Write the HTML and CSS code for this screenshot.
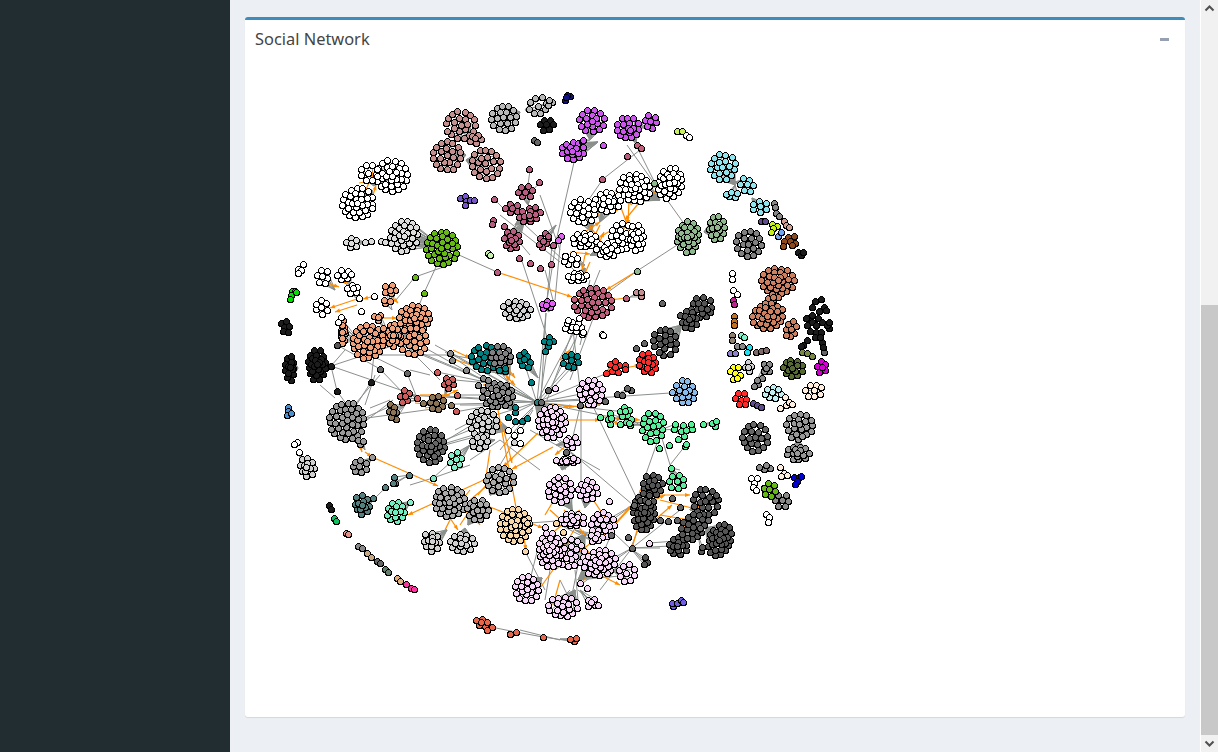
FILE: index.html
```html
<!DOCTYPE html>
<html lang="en">
<head>
<meta charset="utf-8">
<title>Social Network</title>
<link rel="stylesheet" href="styles.css">
</head>
<body>
<div class="app">
  <aside class="sidebar"></aside>
  <main class="content">
    <section class="box">
      <header class="box-header">
        <h3 class="box-title">Social Network</h3>
        <button class="box-tool" type="button" aria-label="Collapse"><span class="minus"></span></button>
      </header>
      <div class="box-body">
        <svg id="graph" class="graph" viewBox="245 64 941 653" xmlns="http://www.w3.org/2000/svg"></svg>
      </div>
    </section>
  </main>
  <div class="scrollbar">
    <div class="sb-btn"><svg width="17" height="17" viewBox="0 0 17 17"><path d="M4.5 10.5 8.5 6.5 12.5 10.5" fill="none" stroke="#505050" stroke-width="2"/></svg></div>
    <div class="sb-track"><div class="sb-thumb"></div></div>
    <div class="sb-btn"><svg width="17" height="17" viewBox="0 0 17 17"><path d="M4.5 6.5 8.5 10.5 12.5 6.5" fill="none" stroke="#505050" stroke-width="2"/></svg></div>
  </div>
</div>
<script src="script.js"></script>
</body>
</html>
```

FILE: styles.css
```css
* { box-sizing: border-box; }
html, body { margin: 0; height: 100%; overflow: hidden; }
body { background: #ecf0f5; font-family: "Noto Sans", "Lato", sans-serif; }
.app { display: flex; width: 1218px; height: 752px; }
.sidebar { flex: 0 0 230px; background: #222d32; }
.content { flex: 1 1 auto; padding: 17px 15px 0; min-width: 0; }
.box { height: 700px; background: #fff; border-top: 3px solid #3c8dbc; border-radius: 3px; box-shadow: 0 1px 1px rgba(0,0,0,.1); display: flex; flex-direction: column; }
.box-header { flex: 0 0 44px; display: flex; align-items: center; justify-content: space-between; padding: 0 16px 6px 10px; }
.box-title { margin: 0; font-size: 16.4px; font-weight: 400; line-height: 1; color: #444; }
.box-tool { border: 0; background: none; padding: 0; display: flex; }
.minus { display: block; width: 9px; height: 3px; background: #97a0b3; }
.box-body { flex: 1 1 auto; min-height: 0; }
.graph { display: block; width: 941px; height: 653px; }
.scrollbar { flex: 0 0 17px; display: flex; flex-direction: column; background: #f1f1f1; border-left: 1px solid #fff; }
.sb-btn { flex: 0 0 17px; display: flex; }
.sb-track { flex: 1 1 auto; padding-top: 288px; }
.sb-thumb { height: 430px; background: #c8c8c8; }
.edge { stroke: #8a8f8c; stroke-width: 1; fill: none; }
.edge-o { stroke: #ff8c00; stroke-width: 1.2; fill: none; }
.node { stroke: #000; stroke-width: 1; shape-rendering: crispEdges; }
.arrow { fill: #ff8c00; }
```

FILE: script.js
```js
(function () {
  var NS = 'http://www.w3.org/2000/svg';
  var svg = document.getElementById('graph');
  var seed = 7;
  function rnd() { seed = (seed * 16807) % 2147483647; return seed / 2147483647; }

  var C = {
    rosy: '#c48f8f', silver: '#b8b8b8', lgray: '#dcdcdc', black: '#1c1c1c', white: '#ffffff',
    purple: '#cc55ee', pale: '#c8f0b0', cyan: '#8ee5ee', sage: '#8fb88f', gray: '#808080',
    rose: '#c0607c', mauve: '#b85c80', green: '#66b814', salmon: '#f0a078', magenta: '#e060f0',
    teal: '#007f80', dark: '#555555', coral: '#cd8060', lilac: '#f5d8f5', red: '#ff2a2a',
    blue: '#88bbee', mint: '#55ee99', ggray: '#999999', brown: '#8b7355', irose: '#cd5c5c',
    tan: '#f8d8a8', slate: '#558080', aqua: '#70eec0', mteal: '#80eec8', orange: '#e8674a',
    dgray: '#666666', olive: '#556b2f', mag2: '#d000d0', yellow: '#ffff20', cream: '#ffeedd',
    pcyan: '#c0eef0', ngray: '#888888', lg2: '#d0d0d0', sil2: '#aaaaaa'
  };

  // x, y, rx, ry, colour, hub x, hub y, rotation (deg)
  var clusters = [
    [461,125,16,15,'rosy',474,139],[447,156,15,16,'rosy',466,155],[486,164,16,16,'rosy',466,160],[476,139,7,6,'rosy',466,140],
    [504,118,14,14,'silver',520,112],[538,106,10,10,'silver',525,110],[551,103,4,5,'silver',540,106],
    [547,125,8,7,'black',552,120],
    [392,176,17,17,'white',376,180,20],[369,173,10,10,'white',374,186],[358,203,17,16,'white',372,190],
    [526,192,9,7,'mauve',528,205],[512,208,8,6,'mauve',525,215],[530,215,12,8,'mauve',515,225,-20],[512,240,9,11,'mauve',525,220],[544,241,5,9,'mauve',556,225,25],
    [404,236,15,17,'lgray',440,245,25],[352,243,7,7,'lgray',365,242],
    [442,248,17,18,'green',445,255],
    [323,277,7,9,'white',335,290],[345,275,9,6,'white',350,288],[353,289,7,6,'white',358,300],[322,307,7,9,'white',330,310],
    [390,290,7,6,'salmon',392,305],[386,302,6,3,'salmon',392,310],[415,318,17,14,'salmon',408,345],[414,341,15,15,'salmon',392,330],[368,342,17,18,'salmon',395,335],[393,335,7,13,'salmon',380,335],[343,332,4,14,'salmon',358,340],[378,317,5,5,'salmon',392,340],
    [517,310,15,10,'lg2',520,322],[547,305,7,6,'magenta',549,312],
    [485,358,15,14,'teal',505,375],[501,357,11,12,'gray',510,375],[525,360,6,10,'teal',538,378,-25],[504,370,6,4,'teal',508,382],
    [571,361,10,8,'teal',571,372],[549,342,6,6,'teal',546,354],
    [317,365,10,17,'black',331,366],[290,368,6,14,'black',298,368],
    [592,121,14,12,'purple',590,140],[628,128,13,12,'purple',636,142],[651,122,8,8,'purple',640,128],[573,151,13,10,'purple',598,142],[583,141,4,3,'purple',590,140],
    [723,167,14,14,'cyan',735,185],[747,185,8,8,'cyan',735,182],[732,195,8,4,'cyan',735,185],[760,207,9,7,'cyan',752,198],
    [749,244,14,14,'gray',750,245],
    [688,237,12,17,'sage',700,232],[717,228,9,14,'sage',704,232],
    [635,188,17,15,'white',660,200,25],[670,183,13,17,'white',657,195,20],[608,202,14,11,'white',600,222],[583,211,14,13,'white',592,232],[622,237,12,15,'white',610,235],[637,238,8,15,'white',630,240,-5],[585,240,14,8,'white',600,245],[607,250,12,8,'white',590,255],[571,260,9,7,'white',585,265],[578,277,11,5,'white',585,268],
    [593,303,20,16,'rose',593,303],[640,294,5,4,'rosy',630,297],
    [573,327,10,6,'white',568,320],[583,333,5,3,'white',572,328],
    [702,308,12,12,'dark',689,322,35],[689,320,9,11,'dark',697,313,-30],[665,342,13,15,'dark',682,325,-20],
    [778,281,18,14,'coral',776,298],[773,298,7,5,'coral',774,290],[768,316,17,14,'coral',776,306,-15],[791,330,6,10,'coral',786,322,20],
    [648,363,9,12,'red',640,368,-20],[615,367,6,8,'red',607,372,-30],
    [591,392,13,14,'lilac',600,405],[629,390,4,4,'dgray',617,394],
    [685,392,11,13,'blue',672,392],
    [625,412,6,7,'mint',617,420],[610,419,3,8,'mint',622,418],[629,423,5,5,'mint',640,425],[653,427,12,16,'mint',640,422],[684,431,4,7,'mint',670,430],[675,427,4,4,'mint',660,430],[692,427,3,4,'mint',680,430],[715,424,4,5,'mint',703,424],[677,482,9,8,'mint',671,468],
    [552,422,15,17,'lilac',535,402],[572,442,7,7,'lilac',556,445],[567,461,13,3,'lilac',562,470],
    [560,490,13,14,'lilac',572,510],[588,490,11,11,'lilac',585,508],[603,525,13,14,'lilac',590,540],[573,520,13,8,'lilac',585,525],[570,553,16,15,'lilac',585,535],[600,563,17,14,'lilac',578,580,-18],[627,573,9,10,'lilac',612,570],
    [563,607,16,11,'lilac',575,590],[592,603,6,6,'lilac',580,590],[595,538,6,6,'lilac',575,530],[527,589,13,14,'lilac',542,578,-15],[550,550,12,19,'lilac',570,545],
    [653,485,11,11,'dark',650,495],[644,512,12,20,'dark',640,510],[706,502,14,15,'dark',690,510,-15],[720,540,12,18,'dark',705,528,22],[678,546,11,10,'dark',690,530],[693,527,12,15,'dark',705,525,30],[702,550,4,4,'dark',698,535],[646,562,4,6,'dark',632,550],
    [755,438,14,15,'dgray',755,440],[800,425,15,12,'ggray',798,437],[798,453,13,8,'ggray',798,440],[797,437,7,4,'ggray',800,430],
    [793,368,11,10,'olive',793,368],[822,367,6,7,'mag2',822,367],[767,368,5,7,'ngray',757,380],[749,367,5,6,'lg2',749,367],
    [773,393,10,7,'pcyan',773,393],[814,391,10,8,'cream',814,391],
    [765,468,7,4,'ngray',772,470],[782,501,8,8,'ngray',780,498],[770,490,8,8,'green',770,490],
    [347,421,19,20,'ggray',360,420],[360,467,9,8,'ggray',372,458],[361,442,5,4,'ggray',365,450],
    [393,412,5,10,'brown',405,405,-15],[437,403,8,9,'brown',425,403],[405,397,6,8,'irose',420,400],[449,383,6,7,'irose',445,395],
    [498,395,17,13,'ngray',515,410],[483,423,15,14,'lg2',510,430],[480,443,10,7,'lg2',495,440],[431,446,15,18,'dgray',445,440],[456,460,7,9,'mteal',470,445],
    [500,480,15,14,'sil2',490,495],[450,502,17,16,'sil2',462,490],[478,510,12,12,'sil2',468,525],[432,542,9,11,'lg2',447,530,-25],[462,543,14,10,'lg2',465,528],
    [515,525,16,18,'tan',510,520],
    [362,505,8,11,'slate',373,498,-20],[394,482,3,6,'slate',409,475],[387,488,3,3,'slate',375,498],[396,512,10,11,'aqua',410,502],
    [307,467,8,11,'lg2',300,456,-15],[482,623,8,5,'orange',490,626,20],[574,640,6,3,'orange',560,639]
  ];

  // explicit single nodes: x, y, colour key
  var singles = [
    [534,140,'dgray'],[537,142,'dgray'],[460,198,'blue2'],[465,196,'blue2'],[466,201,'blue2'],[470,200,'blue2'],[474,200,'blue2'],[465,205,'blue2'],
    [565,100,'navy'],[570,96,'navy'],[567,95,'navy'],[566,97,'navy'],
    [529,169,'mauve'],[539,182,'mauve'],[494,199,'mauve'],[493,220,'mauve'],[492,224,'mauve'],[504,226,'mauve'],[548,236,'mauve'],[540,268,'mauve'],[530,263,'mauve'],[519,258,'mauve'],
    [365,242,'lgray'],[371,241,'lgray'],[381,241,'lgray'],[385,242,'lgray'],
    [488,253,'pale'],[490,255,'pale'],[497,272,'mauve'],[415,277,'green'],[424,293,'green'],
    [298,269,'white'],[303,264,'white'],[301,270,'white'],[298,273,'white'],
    [292,291,'lime'],[295,291,'lime'],[291,295,'lime'],[296,292,'lime'],[290,299,'lime'],
    [281,323,'black'],[286,321,'black'],[284,327,'black'],[289,326,'black'],[283,331,'black'],[288,332,'black'],
    [359,298,'white'],[374,296,'white'],[361,311,'white'],[341,317,'white'],[338,322,'white'],
    [602,179,'mauve'],[627,156,'mauve'],[637,145,'rose'],[641,148,'rose'],[637,271,'sage'],[626,298,'rose'],[654,183,'sage'],[561,236,'magenta'],[553,245,'mauve'],[551,264,'mauve'],
    [677,131,'pale2'],[682,131,'pale2'],[686,135,'white'],[689,137,'white'],
    [774,203,'ngray'],[775,207,'ngray'],[776,213,'ngray'],[779,216,'ngray'],[784,221,'pink'],[786,225,'pink'],[789,227,'pink'],
    [761,221,'dpurple'],[765,221,'dpurple'],[772,224,'lemon'],[777,226,'lemon'],[773,228,'lemon'],[771,232,'lemon'],
    [778,236,'sky'],[781,232,'sky'],[788,237,'bronze'],[794,236,'bronze'],[784,241,'bronze'],[790,241,'bronze'],[795,243,'bronze'],[783,246,'bronze'],[792,245,'bronze'],
    [798,252,'black'],[801,255,'black'],[803,252,'black'],
    [732,273,'white'],[732,279,'white'],[733,290,'white'],[737,294,'white'],[733,300,'mag3'],[734,304,'mag3'],
    [734,316,'copper'],[734,321,'copper'],[734,325,'copper'],[732,335,'taupe'],[732,340,'taupe'],[741,335,'mteal'],[744,337,'mteal'],
    [737,346,'ngray'],[742,346,'ngray'],[749,347,'cyan2'],[747,352,'cyan2'],[730,353,'lav'],[735,353,'lav'],[756,352,'taupe2'],[761,351,'taupe2'],[766,350,'taupe2'],
    [802,352,'olive2'],[807,353,'olive2'],[812,356,'olive2'],[824,352,'dgray'],
    [606,373,'red'],[625,365,'red'],[625,369,'red'],[639,365,'red'],[617,394,'dgray'],[622,395,'dgray'],[605,401,'dgray'],
    [672,392,'blue'],[600,417,'mint'],[620,424,'mint'],[703,424,'mint'],[678,439,'mint'],[685,446,'mint'],[669,445,'mint'],[659,448,'mint'],[686,444,'mint'],[671,468,'mint'],
    [733,367,'yellow'],[730,371,'yellow'],[738,367,'yellow'],[735,373,'yellow'],[740,375,'yellow'],[733,379,'yellow'],[737,378,'yellow'],
    [738,393,'red'],[744,393,'red'],[735,398,'red'],[741,400,'red'],[746,399,'red'],[739,404,'red'],[745,404,'red'],
    [753,403,'dpurple'],[757,405,'dpurple'],[761,407,'dpurple'],[780,408,'cream'],[786,405,'cream'],[789,402,'cream'],[785,397,'cream'],[792,404,'cream'],
    [762,378,'ngray'],[758,384,'ngray'],
    [780,467,'cream'],[784,473,'cream'],[787,475,'cream'],[781,476,'cream'],
    [794,477,'blue3'],[799,477,'blue3'],[801,476,'blue3'],[797,481,'blue3'],[795,484,'blue3'],
    [751,478,'white'],[757,478,'white'],[754,483,'white'],[753,487,'white'],[756,490,'white'],
    [766,514,'white'],[769,517,'white'],[768,522,'white'],
    [673,606,'vio'],[672,603,'vio'],[677,603,'vio'],[681,600,'vio'],[683,602,'vio'],
    [288,407,'blue4'],[288,411,'blue4'],[287,415,'blue4'],[291,413,'blue4'],
    [297,442,'white'],[294,444,'white'],[299,452,'white'],
    [329,505,'black'],[331,509,'black'],[334,518,'jade'],[336,521,'jade'],[346,533,'salmon2'],[348,534,'salmon2'],[358,546,'ngray'],[362,548,'ngray'],[367,553,'khaki'],[371,557,'khaki'],[377,561,'dgray'],[380,563,'dgray'],[385,569,'moss'],[388,572,'moss'],[397,578,'khaki2'],[400,581,'khaki2'],[406,584,'hot'],[411,588,'hot'],[414,589,'hot'],
    [492,627,'orange'],[487,630,'orange'],[510,634,'orange'],[516,632,'orange'],[543,637,'orange'],
    [337,345,'dark'],[331,366,'black'],[337,391,'black'],[371,382,'black'],[372,457,'ggray'],[409,475,'slate'],[373,498,'slate'],[410,502,'mteal'],[433,478,'lgreen'],
    [383,328,'salmon'],[407,373,'dgray'],[380,369,'dgray'],[437,372,'irose'],[417,398,'irose'],[457,395,'irose'],[456,411,'irose'],[451,405,'brown'],[423,403,'brown'],
    [450,353,'ngray'],[452,360,'ngray'],[466,370,'ngray'],[478,385,'ngray'],[483,378,'ngray'],[488,380,'ngray'],
    [537,402,'dteal'],[541,402,'dgray'],[548,390,'dgray'],[531,382,'teal'],[545,351,'teal'],[508,417,'teal'],[515,421,'teal'],[515,412,'teal'],[522,421,'teal'],[515,407,'teal'],[527,418,'teal'],
    [514,435,'white'],[508,430,'white'],[520,430,'white'],[514,442,'lg2'],[520,443,'white'],
    [527,523,'tan'],[525,551,'tan'],[556,523,'tan'],[563,532,'tan'],[545,527,'lilac'],
    [634,505,'dgray'],[632,548,'dgray'],[611,535,'dgray'],[628,537,'dgray'],[649,543,'lilac'],[609,501,'lilac'],
    [648,502,'dgray'],[672,498,'dgray'],[680,507,'dgray'],[700,528,'dgray'],[708,520,'dgray'],[668,521,'dgray'],[660,520,'dgray'],[677,520,'dgray'],
    [587,588,'lilac'],[580,583,'lilac'],[598,605,'lilac'],[558,563,'lilac'],[573,458,'lilac'],[566,452,'dgray'],[566,440,'lilac'],[580,405,'dgray'],[555,388,'lilac'],[590,400,'lilac'],
    [630,130,'purple'],[603,145,'purple'],[558,240,'magenta'],[576,327,'white'],[579,318,'white'],[602,334,'white'],[603,335,'white'],[568,320,'white'],
    [662,303,'dgray'],[636,348,'dgray'],[644,343,'dgray'],[757,380,'ngray'],[754,386,'ngray'],[810,317,'black'],[829,328,'black']
  ];
  var extra = {
    blue2:'#7755cc', navy:'#101080', lime:'#00e000', pale2:'#c8f060', pink:'#d0a090', dpurple:'#604a90', lemon:'#c8f020',
    sky:'#70a8f0', bronze:'#8b4a20', mag3:'#c02090', copper:'#c07020', taupe:'#908070', cyan2:'#20e0f0', lav:'#9080d0',
    taupe2:'#806868', olive2:'#788a40', blue3:'#0000d0', vio:'#7060e0', blue4:'#4a90d0', jade:'#10c060', salmon2:'#e89088',
    khaki:'#c8a880', moss:'#60806a', khaki2:'#dcb080', hot:'#ff30a0', lgreen:'#80e0c0', dteal:'#2a7a78'
  };
  for (var k in extra) C[k] = extra[k];

  // dark sparse cluster, right edge
  [[815,301],[821,299],[824,307],[812,307],[819,311],[826,310],[812,315],[818,318],[812,322],[807,325],[816,325],[822,322],[827,325],[810,331],[816,332],[821,332],[815,337],[807,340],[803,345],[822,342],[823,347],[820,337],[829,322],[806,318],[801,346]]
    .forEach(function (p) { singles.push([p[0], p[1], 'black']); });

  var gray = [
    [449,265,415,277],[415,277,396,300],[436,267,424,293],[424,293,418,308],[459,255,497,272],[593,303,637,271],[637,271,688,238],
    [575,158,557,237],[557,237,547,300],[627,128,637,147],[640,150,603,179],[603,179,585,205],[637,147,655,183],[660,190,690,232],[627,145,654,183],
    [573,330,547,400],[600,300,570,380],[546,313,541,400],[548,343,540,400],[525,365,536,400],[571,368,542,400],[591,392,540,402],
    [537,402,500,385],[537,402,480,362],[537,402,450,352],[537,402,435,345],[537,402,430,395],[537,402,405,395],[537,402,420,405],[537,402,410,350],[537,402,390,340],
    [537,402,480,420],[537,402,552,422],[537,402,590,400],[537,402,625,412],[537,402,650,425],[537,402,685,392],[537,402,605,374],[537,402,570,365],[537,402,505,418],[537,402,575,330],[537,402,546,313],
    [445,352,510,395],[420,345,500,390],[350,345,407,373],[407,373,417,398],[331,366,415,395],[337,345,380,369],[380,369,405,395],[331,366,320,365],[331,366,337,391],[337,391,347,405],[371,382,350,415],[371,382,375,345],[331,366,395,345],[331,366,345,350],[350,410,380,375],
    [367,420,393,400],[367,418,440,408],[437,372,500,385],[470,430,445,440],[500,430,445,445],[500,440,470,460],[470,445,433,478],[433,478,410,485],[470,465,433,478],
    [480,360,450,355],[455,380,510,385],[460,395,500,395],[460,405,500,405],[455,412,510,402],[370,355,450,355],
    [557,440,633,505],[590,400,640,505],[581,400,581,497],[560,440,578,460],[580,407,565,470],[533,408,500,450],[533,410,500,465],[500,440,540,470],[530,430,600,470],
    [561,236,555,300],[552,245,547,300],[545,270,553,300],[520,255,548,340],[505,225,530,255],[495,200,510,215],[530,170,528,185],[540,182,533,190],[540,195,560,250],[500,215,560,262],[525,225,585,280],
    [600,270,578,325],[585,325,580,345],[573,330,581,397],[590,280,572,355],[575,340,552,385],
    [655,500,675,468],[680,470,671,468],[660,432,671,468],[685,446,670,465],[658,440,635,505],
    [633,505,605,525],[633,505,590,530],[632,548,580,585],[632,548,610,560],[632,548,690,545],[632,548,660,548],[632,548,646,565],[632,548,600,590],[632,550,600,520],
    [611,535,600,560],[649,543,690,540],[648,505,630,550],[680,510,632,548],
    [530,523,570,520],[525,551,545,590],[556,523,590,540],[520,630,560,640],[496,628,516,632],[516,632,543,637],[543,637,570,641],
    [578,580,630,575],[578,590,590,600],[570,590,560,600],[575,570,578,600],[570,600,560,580],[583,540,570,605],[550,570,545,600],[540,540,530,580],
    [510,430,540,400],[430,450,480,420],[440,445,490,430],[455,430,490,412],[360,420,393,405],[390,400,370,408],[375,375,365,405],[320,385,335,398],[400,340,440,380],[430,375,410,370]
  ];
  var orange = [
    [372,457,438,486],[488,478,408,515],[498,410,517,513],[490,450,485,483],[553,447,512,469],[538,433,503,467],[503,427,512,463],[490,507,510,515],[530,523,543,528],[524,538,526,550],
    [453,350,470,358],[450,358,480,368],[360,298,330,308],[357,305,335,312],[375,296,363,299],[497,272,572,297],[637,271,606,290],[626,298,610,300],[574,298,600,303],
    [590,226,600,240],[580,235,600,222],[605,215,618,210],[596,250,604,232],[600,225,590,245],[620,205,630,232],[629,200,628,225],[655,183,625,220],[656,187,620,195],[590,262,582,280],[585,255,582,270],
    [628,218,621,232],[595,240,615,228],[570,252,590,254],[615,190,632,205],[650,195,660,190],[583,217,600,215],
    [378,180,384,174],[366,190,373,172],[359,183,376,180],[373,195,376,185],
    [356,287,341,280],[327,283,339,287],[392,297,398,303],[400,335,415,345],[395,325,403,330],[380,318,397,318],
    [440,398,458,390],[415,403,435,405],[420,395,450,395],[425,408,445,405],[360,445,362,452],[365,452,372,457],
    [567,445,555,455],[550,510,570,528],[580,520,565,545],[578,540,600,565],[560,580,553,605],[553,570,535,595],[590,495,610,525],[590,570,620,585],[580,585,600,560],[555,570,595,540],[550,535,580,510],[545,515,560,490],[564,510,585,535],
    [600,540,632,505],[632,548,640,520],[640,490,650,500],[660,500,700,510],[655,500,665,495],[648,495,690,495],[660,515,690,520],[680,525,700,530],[690,500,710,515],[633,505,610,530],[655,520,672,505],
    [600,405,563,407],[537,402,574,407],[601,417,640,420],[610,420,620,425],[640,425,660,418],[560,420,600,420],[610,370,618,375],[625,368,640,365],[606,373,612,368],[672,392,678,388],
    [560,360,570,350],[505,375,515,385],[510,385,483,385],[495,350,515,378],[500,400,510,375],[490,372,510,365],
    [470,490,462,500],[478,495,490,480],[470,500,500,475],[448,515,458,530],[445,530,455,510],[460,525,470,510],[470,510,480,525]
  ];

  function el(name, cls, attrs, parent) {
    var e = document.createElementNS(NS, name);
    e.setAttribute('class', cls);
    for (var a in attrs) e.setAttribute(a, attrs[a]);
    parent.appendChild(e);
    return e;
  }

  var edges = el('g', 'edges', {}, svg);
  var nodesG = el('g', 'nodes', {}, svg);
  var pts = [];
  var GAP = 6.3;   // distance between neighbouring nodes

  // evenly spaced points round an ellipse, by arc length
  function ring(rx, ry, phase) {
    var samples = [], total = 0, i, px = rx, py = 0;
    for (i = 1; i <= 96; i++) {
      var t = i / 96 * Math.PI * 2, qx = rx * Math.cos(t), qy = ry * Math.sin(t);
      total += Math.hypot(qx - px, qy - py);
      samples.push([qx, qy, total]);
      px = qx; py = qy;
    }
    var n = Math.max(1, Math.round(total / GAP)), out = [], idx = 0;
    for (i = 0; i < n; i++) {
      var want = ((i + phase) / n) * total;
      idx = 0;
      while (idx < 95 && samples[idx][2] < want) idx++;
      out.push([samples[idx][0], samples[idx][1]]);
    }
    return out;
  }

  clusters.forEach(function (c) {
    var x = c[0], y = c[1], rx = Math.max(c[2] - 1.6, .6), ry = Math.max(c[3] - 1.6, .6), col = C[c[4]], hx = c[5], hy = c[6], rot = (c[7] || 0) * Math.PI / 180;
    var cs = Math.cos(rot), sn = Math.sin(rot);
    var rings = Math.max(1, Math.round(Math.max(rx, ry) / 6));
    var list = [];
    for (var k = rings; k >= 1; k--) {
      var t = k / rings;
      list = list.concat(ring(rx * t, ry * t, rnd()));
    }
    if (rings > 1 || (rx > 3 && ry > 3)) list.push([0, 0]);
    list.forEach(function (p) {
      var ox = p[0] + (rnd() - .5) * 1.2, oy = p[1] + (rnd() - .5) * 1.2;
      var px = x + ox * cs - oy * sn, py = y + ox * sn + oy * cs;
      el('line', 'edge', { x1: hx, y1: hy, x2: px.toFixed(1), y2: py.toFixed(1) }, edges);
      pts.push([px, py, col]);
    });
  });

  gray.forEach(function (l) {
    el('line', 'edge', { x1: l[0], y1: l[1], x2: l[2], y2: l[3] }, edges);
  });
  orange.forEach(function (l) {
    el('line', 'edge-o', { x1: l[0], y1: l[1], x2: l[2], y2: l[3] }, edges);
    var a = Math.atan2(l[3] - l[1], l[2] - l[0]);
    var bx = l[2] - 5 * Math.cos(a), by = l[3] - 5 * Math.sin(a), nx = -Math.sin(a) * 2, ny = Math.cos(a) * 2;
    el('polygon', 'arrow', { points: [l[2], l[3], bx + nx, by + ny, bx - nx, by - ny].map(function (n) { return n.toFixed(1); }).join(' ') }, edges);
  });

  singles.forEach(function (s) { pts.push([s[0], s[1], C[s[2]]]); });
  pts.forEach(function (p) {
    // centres on pixel centres so each disc rasterises symmetrically
    el('circle', 'node', { cx: Math.floor(p[0]) + .5, cy: Math.floor(p[1]) + .5, r: 3, fill: p[2] }, nodesG);
  });
})();
```
